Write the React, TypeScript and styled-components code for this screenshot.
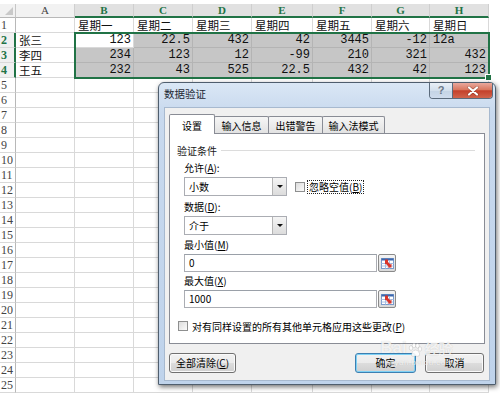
import React from 'react';
import styled, { createGlobalStyle } from 'styled-components';

const GlobalStyle = createGlobalStyle`
  html, body {
    margin: 0;
    padding: 0;
    background: #fff;
  }
  body {
    width: 500px;
    height: 393px;
    overflow: hidden;
  }
`;

const UI_FONT = `"Noto Sans CJK SC", "Noto Sans", sans-serif`;
const GREEN = '#217346';

const LETTERS = ['A', 'B', 'C', 'D', 'E', 'F', 'G', 'H'];
const DAYS = ['星期一', '星期二', '星期三', '星期四', '星期五', '星期六', '星期日'];
const NAMES = ['张三', '李四', '王五'];
const DATA = [
  ['123', '22.5', '432', '42', '3445', '-12', '12a'],
  ['234', '123', '12', '-99', '210', '321', '432'],
  ['232', '43', '525', '22.5', '432', '42', '123'],
];
const ROW_COUNT = 25;

/* ---------- sheet ---------- */

const Page = styled.div`
  position: relative;
  width: 500px;
  height: 393px;
  overflow: hidden;
  background: #fff;
  padding-top: 4px;
  box-sizing: border-box;
`;

const Sheet = styled.div`
  position: relative;
  display: grid;
  grid-template-columns: 16px 59px 59px 59px 59px 61px 59px 58px 59px 1fr;
  grid-template-rows: 14px;
  grid-auto-rows: 15px;
`;

const Corner = styled.div`
  position: relative;
  background: #f2f2f2;
  border-right: 1px solid #c6c6c6;
  border-bottom: 1px solid #b8b8b8;
  box-sizing: border-box;

  &::after {
    content: '';
    position: absolute;
    right: 2px;
    bottom: 2px;
    border-left: 8px solid transparent;
    border-bottom: 8px solid #c9c9c9;
  }
`;

const ColHead = styled.div<{ $selected?: boolean }>`
  box-sizing: border-box;
  background: ${(p) => (p.$selected ? '#e1e1e1' : '#f2f2f2')};
  border-right: 1px solid #cfcfcf;
  border-bottom: ${(p) => (p.$selected ? `2px solid ${GREEN}` : '1px solid #b8b8b8')};
  color: ${(p) => (p.$selected ? GREEN : '#444')};
  font-family: "Liberation Serif", serif;
  font-weight: ${(p) => (p.$selected ? 700 : 400)};
  font-size: 11px;
  line-height: 13px;
  text-align: center;
`;

const RowHead = styled.div<{ $selected?: boolean }>`
  box-sizing: border-box;
  background: ${(p) => (p.$selected ? '#f0f0f0' : '#fff')};
  border-right: ${(p) => (p.$selected ? `2px solid ${GREEN}` : '1px solid #b8b8b8')};
  border-bottom: 1px solid #d9d9d9;
  color: ${(p) => (p.$selected ? GREEN : '#444')};
  font-family: "Liberation Serif", serif;
  font-weight: ${(p) => (p.$selected ? 700 : 400)};
  font-size: 12px;
  line-height: 14px;
  padding-left: 1px;
  white-space: nowrap;
`;

const Cell = styled.div<{ $shade?: boolean; $right?: boolean; $mono?: boolean }>`
  box-sizing: border-box;
  background: ${(p) => (p.$shade ? '#c6c6c6' : '#fff')};
  border-right: 1px solid ${(p) => (p.$shade ? '#b4b4b4' : '#d9d9d9')};
  border-bottom: 1px solid ${(p) => (p.$shade ? '#b4b4b4' : '#d9d9d9')};
  font-family: ${(p) => (p.$mono ? `"Liberation Mono", monospace` : UI_FONT)};
  font-size: ${(p) => (p.$mono ? 12 : 11.5)}px;
  line-height: 14px;
  color: #111;
  text-align: ${(p) => (p.$right ? 'right' : 'left')};
  padding: 0 2px 0 3px;
  white-space: nowrap;
`;

const Tail = styled.div`
  background: #fff;
`;

const SelectionFrame = styled.div`
  position: absolute;
  left: 74px;
  top: 28px;
  width: 416px;
  height: 47px;
  border: 2px solid ${GREEN};
  box-sizing: border-box;
  pointer-events: none;

  &::after {
    content: '';
    position: absolute;
    right: -4px;
    bottom: -4px;
    width: 5px;
    height: 5px;
    background: ${GREEN};
    border: 1px solid #fff;
  }
`;

/* ---------- dialog ---------- */

const Dialog = styled.div`
  position: absolute;
  left: 158px;
  top: 82px;
  width: 338px;
  height: 303px;
  box-sizing: border-box;
  border: 1px solid #4f5e6e;
  border-radius: 6px 6px 0 0;
  background: linear-gradient(180deg, #dae7f5 0px, #c8d9ee 30px, #bfd3eb 100%);
  box-shadow: 1px 2px 5px rgba(0, 0, 0, 0.55);
  display: flex;
  flex-direction: column;
  font-family: ${UI_FONT};
  font-size: 10px;
  color: #000;
`;

const TitleBar = styled.div`
  height: 24px;
  display: flex;
  align-items: flex-start;
  padding-left: 5px;
`;

const Title = styled.div`
  font-size: 10.5px;
  line-height: 21px;
  color: #1e2935;
`;

const CaptionButtons = styled.div`
  margin-left: auto;
  margin-right: 2px;
  display: flex;
  border: 1px solid #5b6b7c;
  border-top: none;
  border-radius: 0 0 4px 4px;
  overflow: hidden;
  height: 16px;
  box-sizing: border-box;
`;

const HelpButton = styled.div`
  width: 22px;
  background: linear-gradient(180deg, #e9eff6 0%, #d3dfec 50%, #c4d3e4 51%, #cfdced 100%);
  border-right: 1px solid #5b6b7c;
  color: #6a7786;
  font-family: "Liberation Sans", sans-serif;
  font-weight: 700;
  font-size: 11px;
  line-height: 15px;
  text-align: center;
`;

const CloseButton = styled.div`
  width: 39px;
  background: linear-gradient(180deg, #e9a89d 0%, #d9775f 45%, #c4402b 52%, #d0634b 100%);
  display: flex;
  align-items: center;
  justify-content: center;
`;

const Client = styled.div`
  flex: 1;
  margin: 0 5px 3px 5px;
  background: #f0f0f0;
  border: 1px solid #a7b9cf;
  padding: 6px 4px 0 4px;
  display: flex;
  flex-direction: column;
`;

const TabRow = styled.div`
  display: flex;
  align-items: flex-end;
  height: 19px;
  padding-left: 1px;
`;

const Tab = styled.div<{ $active?: boolean; $w: number }>`
  position: relative;
  z-index: ${(p) => (p.$active ? 2 : 1)};
  box-sizing: border-box;
  width: ${(p) => p.$w}px;
  height: ${(p) => (p.$active ? 20 : 17)}px;
  margin-bottom: ${(p) => (p.$active ? -1 : 0)}px;
  margin-left: -1px;
  border: 1px solid #898c95;
  border-bottom: none;
  border-radius: 2px 2px 0 0;
  background: ${(p) => (p.$active ? '#fff' : 'linear-gradient(180deg, #f6f6f6, #e2e2e2)')};
  display: flex;
  align-items: center;
  justify-content: center;
  padding-top: 1px;
`;

const Panel = styled.div`
  height: 211px;
  box-sizing: border-box;
  border: 1px solid #898c95;
  background: #fff;
  padding: 9px 7px 0 7px;
  display: flex;
  flex-direction: column;
`;

const GroupHead = styled.div`
  display: flex;
  align-items: center;
  height: 14px;
  gap: 4px;
  color: #1a1a1a;

  &::after {
    content: '';
    flex: 1;
    height: 1px;
    background: #dcdcdc;
    margin-right: 2px;
  }
`;

const Fields = styled.div`
  display: flex;
  flex-direction: column;
  padding-left: 7px;
`;

const FieldLabel = styled.div<{ $gap: number }>`
  height: 14px;
  line-height: 14px;
  margin-top: ${(p) => p.$gap}px;
  margin-bottom: 2px;
`;

const Line = styled.div`
  display: flex;
  align-items: center;
`;

const Select = styled.div`
  width: 103px;
  height: 19px;
  box-sizing: border-box;
  border: 1px solid #abadb3;
  background: #fff;
  display: flex;
  align-items: stretch;
`;

const SelectText = styled.div`
  flex: 1;
  padding-left: 4px;
  line-height: 17px;
`;

const SelectArrow = styled.div`
  width: 14px;
  box-sizing: border-box;
  border-left: 1px solid #b5b5b5;
  background: linear-gradient(180deg, #f5f5f5, #dcdcdc);
  display: flex;
  align-items: center;
  justify-content: center;

  &::before {
    content: '';
    border-left: 3px solid transparent;
    border-right: 3px solid transparent;
    border-top: 3px solid #111;
  }
`;

const Check = styled.div`
  width: 10px;
  height: 10px;
  box-sizing: border-box;
  border: 1px solid #8e8f8f;
  background: linear-gradient(135deg, #dcdcdc, #fbfbfb);
  flex: none;
`;

const Focused = styled.div`
  border: 1px dotted #222;
  padding: 0 1px;
  line-height: 12px;
  margin-left: 2px;
`;

const IgnoreBlank = styled.div`
  display: flex;
  align-items: center;
  margin-left: 8px;
`;

const Input = styled.div`
  width: 193px;
  height: 18px;
  box-sizing: border-box;
  border: 1px solid #abadb3;
  border-top-color: #9aa0a8;
  background: #fff;
  padding-left: 4px;
  line-height: 16px;
`;

const RefButton = styled.div`
  width: 18px;
  height: 18px;
  margin-left: 1px;
  box-sizing: border-box;
  border: 1px solid #8a8a8a;
  border-radius: 2px;
  background: linear-gradient(180deg, #f4f4f4, #d9d9d9);
  display: flex;
  align-items: center;
  justify-content: center;
`;

const ApplyRow = styled.div`
  display: flex;
  align-items: center;
  gap: 4px;
  margin-top: 11px;
  padding-left: 1px;
  height: 14px;
`;

const Buttons = styled.div`
  display: flex;
  justify-content: space-between;
  margin-top: 9px;
  padding-right: 1px;
`;

const ButtonGroup = styled.div`
  display: flex;
  gap: 9px;
`;

const Button = styled.div<{ $w: number; $default?: boolean }>`
  width: ${(p) => p.$w}px;
  height: 20px;
  box-sizing: border-box;
  border: 1px solid ${(p) => (p.$default ? '#3c7fb1' : '#707070')};
  border-radius: 3px;
  background: linear-gradient(180deg, #f2f2f2 0%, #ebebeb 49%, #dddddd 50%, #cfcfcf 100%);
  box-shadow: ${(p) => (p.$default ? 'inset 0 0 0 1px #7ed1f5' : 'inset 0 0 0 1px #fafafa')};
  display: flex;
  align-items: center;
  justify-content: center;
  line-height: 18px;
`;

const Watermark = styled.div`
  position: absolute;
  left: 380px;
  top: 338px;
  display: flex;
  flex-direction: column;
  align-items: center;
  color: rgba(255, 255, 255, 0.8);
  text-shadow: 0 0 1px rgba(0, 0, 0, 0.2);
  pointer-events: none;
`;

const MarkTop = styled.div`
  display: flex;
  align-items: flex-end;
  font-family: "Liberation Sans", sans-serif;
  font-weight: 700;
  font-size: 17px;
  line-height: 20px;
`;

const MarkCjk = styled.span`
  font-family: ${UI_FONT};
  font-size: 14px;
  margin-left: 2px;
`;

const MarkUrl = styled.div`
  font-family: "Liberation Sans", sans-serif;
  font-size: 8px;
  letter-spacing: 0.5px;
  line-height: 10px;
`;

const CloseIcon = () => (
  <svg width="12" height="10" viewBox="0 0 12 10">
    <path d="M2 1.5 L10 8.5 M10 1.5 L2 8.5" stroke="#5a1d14" strokeWidth="3.2" strokeLinecap="round" opacity="0.45" />
    <path d="M2 1.5 L10 8.5 M10 1.5 L2 8.5" stroke="#fff" strokeWidth="2.2" strokeLinecap="round" />
  </svg>
);

const RefIcon = () => (
  <svg width="13" height="12" viewBox="0 0 13 12">
    <rect x="0.5" y="1.5" width="12" height="10" fill="#fff" stroke="#7a9acb" />
    <rect x="0.5" y="1.5" width="12" height="2" fill="#3b67ad" />
    <path d="M0.5 6.5h12M0.5 9h12M4.5 3.5v8M8.5 3.5v8" stroke="#a9c0e2" strokeWidth="1" />
    <path d="M4 2.5 L7 2.5 L7 5 L9.5 7.5 L10.5 6.5 L10.5 10.5 L6.5 10.5 L7.5 9.5 L5 7 L4 7 Z" fill="#d8352b" />
  </svg>
);

const Paw = () => (
  <svg width="16" height="16" viewBox="0 0 16 16">
    <g fill="rgba(255,255,255,0.85)" stroke="rgba(0,0,0,0.18)" strokeWidth="0.6">
      <ellipse cx="4" cy="6" rx="1.8" ry="2.3" />
      <ellipse cx="7" cy="3.5" rx="1.8" ry="2.3" />
      <ellipse cx="10.5" cy="3.8" rx="1.8" ry="2.3" />
      <ellipse cx="13" cy="7" rx="1.7" ry="2.2" />
      <path d="M8.5 8 C11 8 13 11 12.5 13 C12 15 9.5 14 8.5 14 C7 14 4.5 15 4.5 13 C4.5 11 6 8 8.5 8 Z" />
    </g>
  </svg>
);

const SpreadSheet = () => {
  const rows: React.ReactNode[] = [];
  for (let r = 1; r <= ROW_COUNT; r++) {
    const selected = r >= 2 && r <= 4;
    rows.push(
      <RowHead key={`h${r}`} $selected={selected}>
        {r}
      </RowHead>,
    );
    LETTERS.forEach((letter, c) => {
      let content: React.ReactNode = null;
      let right = false;
      let mono = false;
      if (r === 1 && c > 0) content = DAYS[c - 1];
      if (selected && c === 0) content = NAMES[r - 2];
      if (selected && c > 0) {
        content = DATA[r - 2][c - 1];
        mono = true;
        right = /^-?[\d.]+$/.test(String(content));
      }
      rows.push(
        <Cell key={`${letter}${r}`} $shade={selected && c > 0 && !(r === 2 && c === 1)} $right={right} $mono={mono}>
          {content}
        </Cell>,
      );
    });
    rows.push(<Tail key={`t${r}`} />);
  }

  return (
    <Sheet>
      <Corner />
      {LETTERS.map((l, i) => (
        <ColHead key={l} $selected={i > 0}>
          {l}
        </ColHead>
      ))}
      <Tail />
      {rows}
      <SelectionFrame />
    </Sheet>
  );
};

const ValidationDialog = () => (
  <Dialog>
    <TitleBar>
      <Title>数据验证</Title>
      <CaptionButtons>
        <HelpButton>?</HelpButton>
        <CloseButton>
          <CloseIcon />
        </CloseButton>
      </CaptionButtons>
    </TitleBar>
    <Client>
      <TabRow>
        <Tab $active $w={46}>设置</Tab>
        <Tab $w={55}>输入信息</Tab>
        <Tab $w={55}>出错警告</Tab>
        <Tab $w={63}>输入法模式</Tab>
      </TabRow>
      <Panel>
        <GroupHead>验证条件</GroupHead>
        <Fields>
          <FieldLabel $gap={4}>
            允许(<u>A</u>):
          </FieldLabel>
          <Line>
            <Select>
              <SelectText>小数</SelectText>
              <SelectArrow />
            </Select>
            <IgnoreBlank>
              <Check />
              <Focused>
                忽略空值(<u>B</u>)
              </Focused>
            </IgnoreBlank>
          </Line>
          <FieldLabel $gap={4}>
            数据(<u>D</u>):
          </FieldLabel>
          <Line>
            <Select>
              <SelectText>介于</SelectText>
              <SelectArrow />
            </Select>
          </Line>
          <FieldLabel $gap={3}>
            最小值(<u>M</u>)
          </FieldLabel>
          <Line>
            <Input>0</Input>
            <RefButton>
              <RefIcon />
            </RefButton>
          </Line>
          <FieldLabel $gap={2}>
            最大值(<u>X</u>)
          </FieldLabel>
          <Line>
            <Input>1000</Input>
            <RefButton>
              <RefIcon />
            </RefButton>
          </Line>
        </Fields>
        <ApplyRow>
          <Check />
          <span>
            对有同样设置的所有其他单元格应用这些更改(<u>P</u>)
          </span>
        </ApplyRow>
      </Panel>
      <Buttons>
        <Button $w={67}>
          全部清除(<u>C</u>)
        </Button>
        <ButtonGroup>
          <Button $w={61} $default>
            确定
          </Button>
          <Button $w={59}>取消</Button>
        </ButtonGroup>
      </Buttons>
    </Client>
  </Dialog>
);

const App = () => (
  <Page>
    <GlobalStyle />
    <SpreadSheet />
    <ValidationDialog />
    <Watermark>
      <MarkTop>
        Bai
        <Paw />
        <MarkCjk>经验</MarkCjk>
      </MarkTop>
      <MarkUrl>jingyan.baidu.com</MarkUrl>
    </Watermark>
  </Page>
);

export default App;
